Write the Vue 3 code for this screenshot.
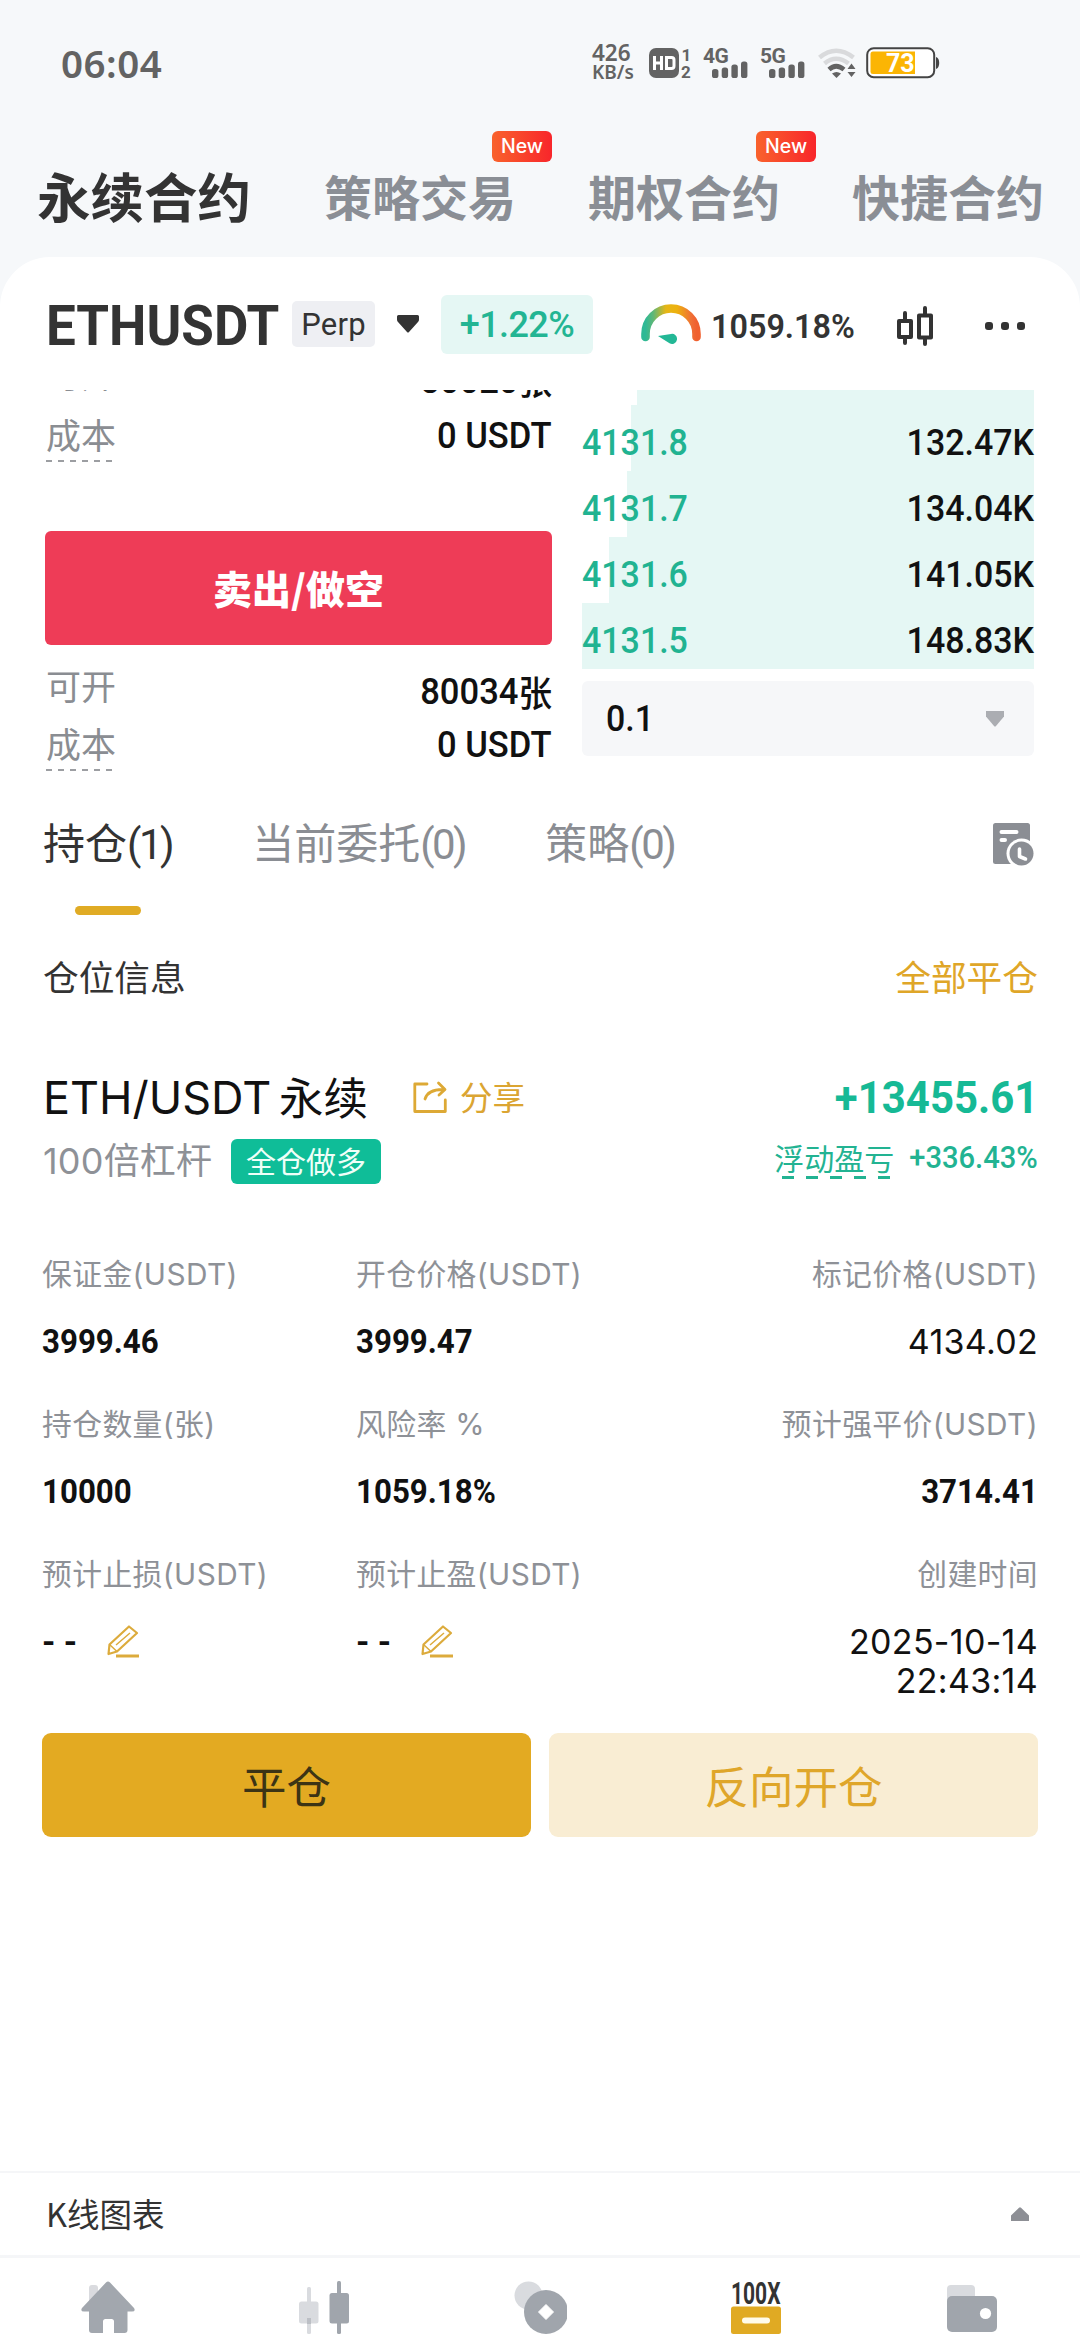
<script setup>
const topTabs = [
  { label: '永续合约', active: true },
  { label: '策略交易', badge: 'New' },
  { label: '期权合约', badge: 'New' },
  { label: '快捷合约' },
]

// Depth is the share of the column that the bid bar covers.
const bids = [
  { price: '', amount: '', depth: 87.9 },
  { price: '4131.8', amount: '132.47K', depth: 89.2 },
  { price: '4131.7', amount: '134.04K', depth: 90.1 },
  { price: '4131.6', amount: '141.05K', depth: 94.1 },
  { price: '4131.5', amount: '148.83K', depth: 100 },
]

const orderTabs = [
  { label: '持仓', count: 1, active: true },
  { label: '当前委托', count: 0 },
  { label: '策略', count: 0 },
]

const stats = [
  { label: '保证金(USDT)', value: '3999.46' },
  { label: '开仓价格(USDT)', value: '3999.47' },
  { label: '标记价格(USDT)', value: '4134.02', plain: true },
  { label: '持仓数量(张)', value: '10000' },
  { label: '风险率 %', value: '1059.18%' },
  { label: '预计强平价(USDT)', value: '3714.41' },
  { label: '预计止损(USDT)', edit: true },
  { label: '预计止盈(USDT)', edit: true },
  { label: '创建时间', value: '2025-10-14 22:43:14', plain: true },
]
</script>

<template>
  <div class="page">
    <div class="status">
      <span class="clock">06:04</span>
      <div class="net"><span class="rate">426</span><span class="unit">KB/s</span></div>
      <svg class="hd" width="44" height="32" viewBox="0 0 44 32">
        <rect x="1" y="1" width="30" height="30" rx="7" fill="#636363" />
        <path d="M6.500 9v14M13.500 9v14M6.500 16h7M18.500 10.500h5q2.500 0 2.500 2.500v6q0 2.500-2.500 2.500h-5z" fill="none" stroke="#fff" stroke-width="3" />
        <text x="33.500" y="13.500" class="hdn">1</text>
        <text x="33" y="31" class="hdn">2</text>
      </svg>
      <svg v-for="g in ['4G', '5G']" :key="g" class="signal" width="46" height="34" viewBox="0 0 46 34">
        <text x="0" y="17" class="gen">{{ g }}</text>
        <rect x="9" y="23" width="6.400" height="9" rx="2.600" />
        <rect x="18.700" y="21.500" width="6.400" height="10.500" rx="2.600" />
        <rect x="28.400" y="18.500" width="6.400" height="13.500" rx="2.600" />
        <rect x="38" y="15.500" width="6.400" height="16.500" rx="2.600" />
      </svg>
      <svg class="wifi" width="38" height="32" viewBox="0 0 38 32">
        <g fill="none" stroke-width="4.600">
          <path d="M1.500 10.500Q18 -3 35.500 10.500" stroke="#d9dadc" />
          <path d="M6.500 16.500Q18 7 30.500 16.500" stroke="#d9dadc" />
          <path d="M11 22.500Q18 16 26 22.500" stroke="#636363" />
        </g>
        <path d="M14 26.500q4.500-3 9 0L18.500 31z" fill="#636363" />
        <path d="M33.500 16.500l4 5.500h-8zM33.500 30l4-5h-8z" fill="#636363" />
      </svg>
      <svg class="battery" width="74" height="32" viewBox="0 0 74 32">
        <rect x="1.200" y="1.200" width="67" height="29" rx="6.500" fill="#fff" stroke="#444" stroke-width="2" />
        <path d="M70 10q3.200 1 3.200 6T70 22z" fill="#444" />
        <path d="M7 4.500h42v22.500H7q-2.500 0-2.500-2.500V7q0-2.500 2.500-2.500z" fill="#fbb504" />
        <text x="20" y="24.500" class="pct">73</text>
      </svg>
    </div>

    <nav class="toptabs">
      <span v-for="t in topTabs" :key="t.label" class="toptab" :class="{ active: t.active }">
        {{ t.label }}<b v-if="t.badge" class="new">{{ t.badge }}</b>
      </span>
    </nav>

    <main class="card">
      <header class="head">
        <h1 class="symbol"><span class="din">ETHUSDT</span></h1>
        <span class="perp">Perp</span>
        <svg class="caret" width="22" height="18" viewBox="0 0 22 18"><path d="M1.500 0h19q1.500 0 1.500 1.500v3q0 1.500-1 2.500l-9 10q-1 1-2 0L1 7Q0 6 0 4.500v-3Q0 0 1.500 0z" fill="#333" /></svg>
        <span class="change">+1.22%</span>
        <svg class="gauge" width="60" height="40" viewBox="0 0 60 40">
          <defs>
            <linearGradient id="arc" x1="0" y1="0" x2="1" y2="0">
              <stop offset="0" stop-color="#2fb995" />
              <stop offset=".15" stop-color="#5fb777" />
              <stop offset=".4" stop-color="#e6b616" />
              <stop offset=".62" stop-color="#edb10f" />
              <stop offset=".9" stop-color="#ef6f36" />
              <stop offset="1" stop-color="#f0602f" />
            </linearGradient>
          </defs>
          <path d="M4.500 33v-3a25.500 25.500 0 0 1 51 0v3" fill="none" stroke="url(#arc)" stroke-width="8.600" stroke-linecap="round" />
          <path d="M17 32l13-2a5 5 0 1 1-1.500 9.200z" fill="#23b896" />
        </svg>
        <span class="risk"><span class="din">1059.18%</span></span>
        <svg class="kicon" width="37" height="40" viewBox="0 0 37 40" fill="none" stroke="#333" stroke-width="4" stroke-linecap="round" stroke-linejoin="round">
          <rect x="2" y="15" width="12" height="16" /><path d="M8 7v7M8 32v5" />
          <rect x="22" y="9.500" width="12" height="22" /><path d="M28 2v7M28 32v6" />
        </svg>
        <span class="dots"><i /><i /><i /></span>
      </header>

      <section class="trade">
        <div class="order">
          <div class="line first"><span class="key">可开</span><span class="val low">80020<em>张</em></span></div>
          <div class="line"><span class="key dashed">成本</span><span class="val">0 USDT</span></div>
          <button class="sell">卖出/做空</button>
          <div class="line"><span class="key">可开</span><span class="val low">80034<em>张</em></span></div>
          <div class="line"><span class="key dashed">成本</span><span class="val">0 USDT</span></div>
        </div>
        <div class="book">
          <div v-for="b in bids" :key="b.price" class="bid">
            <i class="depth" :style="{ width: b.depth + '%' }" />
            <span class="price">{{ b.price }}</span><span class="amount">{{ b.amount }}</span>
          </div>
          <div class="step">
            <span class="din">0.1</span>
            <svg width="18" height="16" viewBox="0 0 18 16"><path d="M0 0h18v5.500L10 15q-1 1-2 0L0 5.500z" fill="#abadb2" /></svg>
          </div>
        </div>
      </section>

      <div class="tabs">
        <div v-for="t in orderTabs" :key="t.label" class="tab" :class="{ active: t.active }">
          <span class="tabtext">{{ t.label }}<span class="cnt">({{ t.count }})</span></span>
          <i v-if="t.active" class="bar" />
        </div>
        <svg class="history" width="42" height="44" viewBox="0 0 42 44">
          <rect x="0" y="0" width="37" height="41" rx="2.500" fill="#8b8e94" />
          <path d="M8.500 9h15M8.500 17h3.500" stroke="#fff" stroke-width="4" stroke-linecap="round" />
          <circle cx="28.500" cy="30.500" r="15" fill="#fff" />
          <circle cx="28.500" cy="30.500" r="12" fill="#8b8e94" />
          <path d="M26.500 26v7.500l6 2.500" fill="none" stroke="#fff" stroke-width="3.600" stroke-linecap="round" stroke-linejoin="round" />
        </svg>
      </div>

      <div class="row info"><span>仓位信息</span><span class="gold">全部平仓</span></div>

      <div class="row title">
        <span class="pair">ETH/USDT</span><span class="kind">永续</span>
        <svg class="share" width="34" height="32" viewBox="0 0 34 32" fill="none" stroke="#dda935" stroke-width="2.800" stroke-linecap="round" stroke-linejoin="round">
          <path d="M14 3H1.800v27.500h30.500V19" /><path d="M12 18Q15 8 31 8.500M25.500 2L32 8.500 26 14" />
        </svg>
        <span class="sharetext">分享</span>
        <span class="pnl">+13455.61</span>
      </div>
      <div class="row lever">
        <span class="times">100倍杠杆</span><span class="side">全仓做多</span>
        <span class="float">浮动盈亏</span><span class="roe">+336.43%</span>
      </div>

      <div class="grid">
        <div v-for="s in stats" :key="s.label" class="stat">
          <span class="label">{{ s.label }}</span>
          <span v-if="s.edit" class="value edit">
            <span class="none">- -</span>
            <svg width="32" height="33" viewBox="0 0 32 33" fill="none" stroke="#dcab3c" stroke-width="2.200" stroke-linejoin="round">
              <path d="M2.500 19.500L22 1.500l8 6.500L10 26.500 1.500 29z" /><path d="M2.500 19.500l7.500 7M9 20L23 8" stroke-width="1.500" /><path d="M9 31h23" stroke-width="3" />
            </svg>
          </span>
          <span v-else class="value" :class="s.plain ? 'plain' : 'din'">{{ s.value }}</span>
        </div>
      </div>

      <div class="actions">
        <button class="close">平仓</button>
        <button class="reverse">反向开仓</button>
      </div>
    </main>

    <div class="kline">
      <span>K线图表</span>
      <svg width="18" height="14" viewBox="0 0 18 14"><path d="M0 14V8.500L8 .7q1-1 2 0l8 7.800V14z" fill="#8d8f95" /></svg>
    </div>

    <footer class="nav">
      <svg width="54" height="54" viewBox="0 0 54 54">
        <rect x="8" y="4" width="9" height="24" rx="3" fill="#dadbdf" />
        <path d="M25 1.500q2-2 4 0L53 27q2 3.500-2 3.500h-4.500V49q0 3-3 3H33V40.500q0-2.500-2.500-2.500h-6q-2.500 0-2.500 2.500V52H11q-3 0-3-3V30.500H3q-4 0-2-3.500z" fill="#a2a7ae" />
      </svg>
      <svg width="50" height="54" viewBox="0 0 50 54">
        <g fill="#d9dbdf"><rect x="8" y="6" width="4" height="47" rx="1.500" /><rect y="20.500" width="19.500" height="22" rx="2.500" /></g>
        <rect x="8" y="37" width="4" height="6" fill="#bcbfc5" />
        <g fill="#a0a5ac"><rect x="38" y="0" width="4" height="53" rx="1.500" /><rect x="30.500" y="12" width="19.500" height="30.500" rx="2.500" /></g>
      </svg>
      <svg class="coin" width="54" height="54" viewBox="0 0 54 54">
        <circle cx="15.500" cy="14.500" r="14" fill="#d9dbdf" />
        <circle cx="33" cy="31" r="22" fill="#a0a5ac" />
        <path d="M33 23.500l7.500 7.500-7.500 7.500-7.500-7.500z" fill="#fff" stroke="#fff" stroke-linejoin="round" />
      </svg>
      <svg width="50" height="54" viewBox="0 0 50 54">
        <text x="0" y="22.500" textLength="49.500" lengthAdjust="spacingAndGlyphs" class="hundred">100X</text>
        <rect y="25.500" width="50" height="27.500" rx="2.500" fill="#e0aa23" />
        <rect x="11" y="36.500" width="28" height="6" rx="3" fill="#fffbea" />
      </svg>
      <svg width="50" height="54" viewBox="0 0 50 54">
        <rect y="4" width="28" height="24" rx="4" fill="#d9dbdf" />
        <rect y="15" width="50" height="36" rx="5" fill="#a0a5ac" />
        <circle cx="38.500" cy="32.500" r="5.600" fill="#fff" />
      </svg>
    </footer>
  </div>
</template>

<style>
body { margin: 0; }
</style>

<style scoped>
.page { width: 1080px; height: 2344px; display: flex; flex-direction: column; background: #f6f8fa; font-family: "Noto Sans CJK SC", sans-serif; color: #111; overflow: hidden; }
.page * { box-sizing: border-box; }
.page > * { flex: none; }
svg { display: block; flex: none; }
button { border: 0; padding: 0; font-family: inherit; }
i, em { font-style: normal; }

/* Numerals are drawn slightly condensed. */
.din { display: inline-block; transform: scaleX(.93); transform-origin: 0 50%; }

.status { height: 126px; display: flex; align-items: center; color: #636363; }
.clock { width: 530px; padding-left: 61px; font: 600 38.500px/54px "Noto Sans", sans-serif; letter-spacing: .5px; margin-top: -1px; }
.net { width: 57px; margin-left: 62px; height: 40px; display: flex; flex-direction: column; font-family: "Noto Sans", sans-serif; font-weight: 600; white-space: nowrap; }
.rate { font-size: 22.500px; line-height: 19px; }
.unit { font-size: 19px; line-height: 20px; }
.hd { margin-left: -1px; overflow: visible; }
.hdn { font: 700 17px Roboto, sans-serif; fill: #636363; }
.signal { margin-left: 11px; fill: #636363; overflow: visible; }
.gen { font: 700 21px Roboto, sans-serif; letter-spacing: -.5px; }
.wifi { margin-left: 12px; }
.battery { margin-left: 10px; }
.pct { font: 700 25px Roboto, sans-serif; fill: #fff; }

.toptabs { height: 131px; padding: 6px 0 0 37px; display: flex; align-items: center; }
.toptab { position: relative; font-size: 48px; line-height: 60px; font-weight: 700; color: #8a8e95; margin-left: 72px; white-space: nowrap; }
.toptab.active { width: 216px; font-size: 53.500px; color: #333; margin: 0; }
.toptab.active + .toptab { margin-left: 71px; }
.new { position: absolute; right: -36px; top: -34px; width: 60px; height: 31px; border-radius: 6px; background: linear-gradient(90deg, #f9622c, #f8262b); color: #fff; font: 500 19.500px/31px Inter, sans-serif; text-align: center; }

.card { flex: 1 !important; background: #fff; border-radius: 50px 50px 0 0; }
.head { height: 133px; padding: 5px 0 0 46px; display: flex; align-items: center; font-family: Roboto, sans-serif; color: #333; white-space: nowrap; }
.symbol { margin: 0; width: 246px; font-size: 55px; line-height: 60px; font-weight: 700; }
.symbol .din { transform: scaleX(.962); }
.perp { width: 83px; height: 46px; border-radius: 5px; background: #eeeff3; text-align: center; font-size: 31px; line-height: 47px; letter-spacing: .2px; margin-top: -5px; }
.caret { margin-left: 22px; margin-top: -4px; }
.change { margin-left: 22px; width: 152px; height: 59px; border-radius: 6px; background: #e5f7f4; color: #23b593; font-size: 36px; line-height: 61px; font-weight: 500; text-align: center; margin-top: -3px; letter-spacing: -.6px; }
.gauge { margin-left: 48px; margin-top: -4px; }
.risk { margin-left: 10px; width: 186px; font-size: 33.500px; font-weight: 600; }
.risk .din { transform: scaleX(.965); }
.dots { margin-left: 51px; display: flex; gap: 8px; }
.dots i { width: 8px; height: 8px; border-radius: 3px; background: #333; }

.trade { height: 400px; overflow: hidden; display: flex; padding-left: 45px; font-family: Roboto, "Noto Sans CJK SC", sans-serif; }
.order { width: 507px; margin-top: -41px; }
.line { height: 58px; display: flex; justify-content: space-between; align-items: center; }
.line.first { padding-bottom: 5px; }
.key { font: 400 35px/46px "Noto Sans CJK SC", sans-serif; color: #8a8d92; margin-top: -5px; padding-left: 1px; }
.key.dashed { background: repeating-linear-gradient(90deg, #9c9ea2 0 6px, transparent 6px 12px) 1px 100% / 68px 2px no-repeat; height: 51px; margin-top: 0; line-height: 46px; }
.val { display: flex; align-items: center; height: 40px; font-size: 37px; line-height: 40px; font-weight: 500; transform: scaleX(.935); transform-origin: 100% 50%; }
.val.low { margin-top: 10px; }
.val em { font: 500 36px/40px "Noto Sans CJK SC", sans-serif; margin-top: -3px; }
.sell { display: block; width: 507px; height: 114px; margin: 66px 0 13px; padding-bottom: 3px; border-radius: 6px; background: #ee3c57; color: #fff; font-family: "Noto Sans CJK SC", sans-serif; font-size: 39px; font-weight: 900; line-height: 110px; }
.book { width: 452px; margin: -51px 0 0 30px; }
.bid { position: relative; height: 66px; padding-top: 8px; display: flex; justify-content: space-between; align-items: center; font-size: 36.500px; font-weight: 500; }
.depth { position: absolute; right: 0; top: 0; height: 66px; background: #e5f7f4; }
.price, .amount { position: relative; transform: scaleX(.93); }
.price { color: #21b391; transform-origin: 0 50%; }
.amount { transform-origin: 100% 50%; }
.step { height: 75px; margin-top: 12px; padding: 0 30px 0 24px; display: flex; align-items: center; justify-content: space-between; border-radius: 6px; background: #f6f7f9; font-size: 36.500px; font-weight: 500; }

.tabs { height: 125px; padding: 28px 0 0 43px; display: flex; }
.tab { margin-right: 80px; font-size: 42px; line-height: 50px; color: #8a8d93; }
.tab.active { color: #333; }
.tabtext { display: block; height: 50px; line-height: 46px; white-space: nowrap; }
.cnt { font-family: Roboto, sans-serif; letter-spacing: -2.500px; }
.bar { display: block; width: 66px; height: 9px; border-radius: 5px; margin: 38px auto 0; background: #e0ab24; }
.history { margin: 5px 45px 0 auto; }

.row { display: flex; align-items: center; padding: 0 42px 0 43px; white-space: nowrap; }
.info { height: 60px; margin-top: 32px; justify-content: space-between; font-size: 35.700px; line-height: 56px; color: #333; }
.info span { margin-top: -3px; }
.gold { color: #dfa628; }
.title { height: 50px; margin-top: 66px; }
.kind { width: 134px; font-size: 44.500px; line-height: 50px; margin-top: -5px; }
.pair { width: 236px; font: 400 45px/50px Inter, sans-serif; }
.share { margin-top: -2px; }
.sharetext { margin: -5px 0 0 13px; font-size: 32.500px; line-height: 40px; color: #dba532; }
.pnl { margin-left: auto; font: 700 45px/50px Roboto, sans-serif; transform: scaleX(.932); transform-origin: 100% 50%; color: #16b995; }
.lever { height: 50px; margin-top: 13px; }
.times { width: 188px; font: 400 36px/46px Inter, "Noto Sans CJK SC", sans-serif; letter-spacing: .2px; color: #8e9197; }
.side { width: 150px; height: 45px; border-radius: 6px; background: #0fbd98; color: #effff8; font-size: 30px; line-height: 42px; text-align: center; }
.float { margin-left: auto; height: 42px; font-size: 30px; line-height: 34px; color: #22b392; background: repeating-linear-gradient(90deg, transparent 0 8px, #22b392 8px 20px, transparent 20px 24px) 0 36px / 117px 3px no-repeat; }
.roe { margin-left: 7px; margin-top: -6px; font: 500 31px/36px Roboto, sans-serif; transform: scaleX(.94); transform-origin: 100% 50%; color: #22b392; }

.grid { margin-top: 69px; padding: 0 42px; display: grid; grid-template-columns: 314px 315px 1fr; row-gap: 44px; }
.stat { display: flex; flex-direction: column; align-items: flex-start; }
.stat:nth-child(3n) { align-items: flex-end; text-align: right; }
.label { height: 40px; font: 400 29.800px/38px Inter, "Noto Sans CJK SC", sans-serif; letter-spacing: .4px; color: #8e9197; white-space: nowrap; }
.value { margin-top: 26px; font: 700 34px/40px Roboto, sans-serif; }
.value.din { transform: scaleX(.92); }
.stat:nth-child(3n) .din { transform-origin: 100% 50%; }
.value.plain { width: 230px; font: 400 34px/39px Inter, sans-serif; letter-spacing: .3px; margin: 27px 0 -1px; }
.edit { display: flex; align-items: center; }
.none { width: 65px; }

.actions { display: flex; gap: 18px; padding: 0 42px; margin-top: 34px; }
.actions button { width: 489px; height: 104px; border-radius: 9px; font-size: 44.500px; line-height: 100px; }
.close { background: #e3aa22; color: #3c3415; }
.reverse { background: #f9edd3; color: #dfa62a; }

.kline { height: 84px; padding: 0 51px 0 46px; display: flex; align-items: center; justify-content: space-between; background: #fff; border-top: 2px solid #f5f6f8; font-size: 32.500px; line-height: 40px; color: #333; }
.kline span { margin-top: -2px; }
.nav { height: 89px; display: grid; grid-template-columns: repeat(5, 1fr); align-items: center; background: #fff; border-top: 3px solid #f5f6f8; padding-top: 13px; }
.nav svg { margin: 0 auto; }
.hundred { font: 700 31px Roboto, sans-serif; fill: #333; }
</style>
